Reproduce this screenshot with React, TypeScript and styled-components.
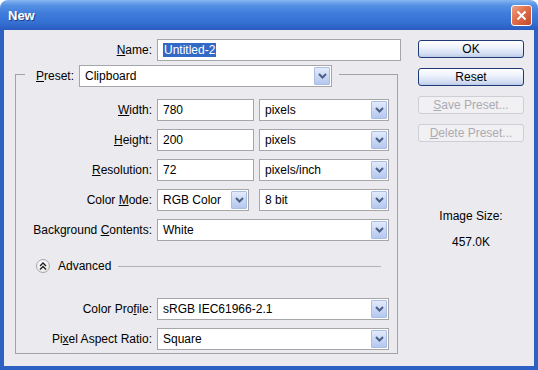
import React from "react";
import styled, { createGlobalStyle } from "styled-components";

const GlobalStyle = createGlobalStyle`
  html, body {
    margin: 0;
    padding: 0;
    background: #ffffff;
  }
  body {
    font-family: "Liberation Sans", Arial, sans-serif;
    font-size: 12px;
    color: #000000;
  }
`;

const Window = styled.div`
  width: 538px;
  height: 370px;
  display: flex;
  flex-direction: column;
  border-radius: 8px 8px 0 0;
  overflow: hidden;
`;

const TitleBar = styled.div`
  height: 30px;
  flex-shrink: 0;
  display: flex;
  align-items: center;
  justify-content: space-between;
  padding: 0 6px 0 8px;
  background: linear-gradient(
    #86b6f0 0%,
    #5590e4 18%,
    #3f7cdb 45%,
    #3570d2 75%,
    #2a5bc0 100%
  );
`;

const Title = styled.span`
  color: #ffffff;
  font-weight: bold;
  font-size: 13px;
  text-shadow: 1px 1px 0 #1d3f8c;
`;

const CloseButton = styled.div`
  width: 19px;
  height: 19px;
  border: 1px solid #ffffff;
  border-radius: 3px;
  display: flex;
  align-items: center;
  justify-content: center;
  background: linear-gradient(135deg, #eba286 0%, #e06e4a 45%, #c4482a 100%);
`;

const Frame = styled.div`
  flex: 1;
  display: flex;
  background: #ebeaee;
  border: 4px solid #2f61c4;
  border-top: none;
  padding: 9px 0 0 11px;
`;

const LeftColumn = styled.div`
  width: 386px;
  display: flex;
  flex-direction: column;
`;

const NameRow = styled.div`
  display: grid;
  grid-template-columns: 137px 244px;
  column-gap: 5px;
  align-items: center;
`;

const Label = styled.span`
  text-align: right;
  white-space: nowrap;
`;

const U = styled.span`
  text-decoration: underline;
`;

const TextBox = styled.div`
  height: 22px;
  box-sizing: border-box;
  border: 1px solid #a5a5aa;
  background: #ffffff;
  padding: 0 5px;
  display: flex;
  align-items: center;
  white-space: nowrap;
`;

const Selected = styled.span`
  background: #3169c6;
  color: #ffffff;
  padding: 0 1px;
`;

const SelectBox = styled.div<{ $width?: number }>`
  height: 22px;
  width: ${(p) => (p.$width ? `${p.$width}px` : "auto")};
  box-sizing: border-box;
  border: 1px solid #a5a5aa;
  background: #ffffff;
  padding: 1px 1px 1px 5px;
  display: flex;
  align-items: center;
  white-space: nowrap;
`;

const SelectText = styled.span`
  flex: 1;
`;

const ArrowButton = styled.div`
  width: 16px;
  height: 18px;
  box-sizing: border-box;
  border: 1px solid #aabde2;
  border-radius: 1px;
  background: linear-gradient(#e3ebfb, #c6d5f3 60%, #b4c7ee);
  display: flex;
  align-items: center;
  justify-content: center;
`;

const Group = styled.fieldset`
  margin: 0;
  width: 383px;
  min-width: 0;
  box-sizing: border-box;
  border: 1px solid #a3a3a6;
  padding: 12px 8px 3px 0;
  display: flex;
  flex-direction: column;
  gap: 8px;
`;

const Legend = styled.legend`
  margin-left: 9px;
  padding: 4px 7px 0 11px;
  display: flex;
  align-items: center;
  gap: 5px;
`;

const Row = styled.div`
  display: grid;
  grid-template-columns: 136px 1fr;
  column-gap: 5px;
  align-items: center;
`;

const Pair = styled.div`
  display: grid;
  grid-template-columns: 97px 130px;
  column-gap: 5px;
  align-items: center;
`;

const AdvancedRow = styled.div`
  display: flex;
  align-items: center;
  margin: 10px 8px 17px 20px;
`;

const RoundToggle = styled.div`
  width: 14px;
  height: 14px;
  box-sizing: border-box;
  border-radius: 50%;
  border: 1px solid #a8a8ac;
  background: radial-gradient(circle at 40% 35%, #ffffff, #e4e4e8);
  display: flex;
  align-items: center;
  justify-content: center;
  margin-right: 8px;
`;

const Rule = styled.div`
  flex: 1;
  height: 1px;
  background: #b4b4b8;
  margin-left: 7px;
`;

const RightColumn = styled.div`
  width: 106px;
  margin-left: 17px;
  padding-top: 1px;
  display: flex;
  flex-direction: column;
  gap: 10px;
`;

const Button = styled.div<{ $disabled?: boolean }>`
  height: 18px;
  box-sizing: border-box;
  border-radius: 3px;
  display: flex;
  align-items: center;
  justify-content: center;
  white-space: nowrap;
  border: 1px solid ${(p) => (p.$disabled ? "#cfced4" : "#1e3b78")};
  color: ${(p) => (p.$disabled ? "#acabb2" : "#000000")};
  background: ${(p) =>
    p.$disabled
      ? "#f1f0f3"
      : "linear-gradient(#ffffff 0%, #eef3fc 40%, #d3def3 80%, #bccbe9 100%)"};
`;

const SizeInfo = styled.div`
  margin-top: 57px;
  display: flex;
  flex-direction: column;
  align-items: center;
  gap: 12px;
  line-height: 14px;
`;

const Chevron = () => (
  <svg width="9" height="6" viewBox="0 0 9 6">
    <path d="M1 1 L4.5 4.5 L8 1" stroke="#4b5f86" strokeWidth="2" fill="none" />
  </svg>
);

const Select: React.FC<{ value: string; width?: number }> = ({ value, width }) => (
  <SelectBox $width={width}>
    <SelectText>{value}</SelectText>
    <ArrowButton>
      <Chevron />
    </ArrowButton>
  </SelectBox>
);

const App: React.FC = () => {
  return (
    <>
      <GlobalStyle />
      <Window>
        <TitleBar>
          <Title>New</Title>
          <CloseButton>
            <svg width="11" height="11" viewBox="0 0 11 11">
              <path d="M1.5 1.5 L9.5 9.5 M9.5 1.5 L1.5 9.5" stroke="#ffffff" strokeWidth="2" />
            </svg>
          </CloseButton>
        </TitleBar>

        <Frame>
          <LeftColumn>
            <NameRow>
              <Label>
                <U>N</U>ame:
              </Label>
              <TextBox>
                <Selected>Untitled-2</Selected>
              </TextBox>
            </NameRow>

            <Group>
              <Legend>
                <Label>
                  <U>P</U>reset:
                </Label>
                <Select value="Clipboard" width={253} />
              </Legend>

              <Row>
                <Label>
                  <U>W</U>idth:
                </Label>
                <Pair>
                  <TextBox>780</TextBox>
                  <Select value="pixels" />
                </Pair>
              </Row>
              <Row>
                <Label>
                  <U>H</U>eight:
                </Label>
                <Pair>
                  <TextBox>200</TextBox>
                  <Select value="pixels" />
                </Pair>
              </Row>
              <Row>
                <Label>
                  <U>R</U>esolution:
                </Label>
                <Pair>
                  <TextBox>72</TextBox>
                  <Select value="pixels/inch" />
                </Pair>
              </Row>
              <Row>
                <Label>
                  Color <U>M</U>ode:
                </Label>
                <Pair>
                  <Select value="RGB Color" width={92} />
                  <Select value="8 bit" />
                </Pair>
              </Row>
              <Row>
                <Label>
                  Background <U>C</U>ontents:
                </Label>
                <Select value="White" />
              </Row>

              <AdvancedRow>
                <RoundToggle>
                  <svg width="8" height="8" viewBox="0 0 8 8">
                    <path
                      d="M1 4 L4 1 L7 4 M1 7.5 L4 4.5 L7 7.5"
                      stroke="#1e1e1e"
                      strokeWidth="1.4"
                      fill="none"
                    />
                  </svg>
                </RoundToggle>
                <span>Advanced</span>
                <Rule />
              </AdvancedRow>

              <Row>
                <Label>
                  Color Pro<U>f</U>ile:
                </Label>
                <Select value="sRGB IEC61966-2.1" />
              </Row>
              <Row>
                <Label>
                  Pi<U>x</U>el Aspect Ratio:
                </Label>
                <Select value="Square" />
              </Row>
            </Group>
          </LeftColumn>

          <RightColumn>
            <Button>OK</Button>
            <Button>Reset</Button>
            <Button $disabled>
              <U>S</U>ave Preset...
            </Button>
            <Button $disabled>
              <U>D</U>elete Preset...
            </Button>
            <SizeInfo>
              <span>Image Size:</span>
              <span>457.0K</span>
            </SizeInfo>
          </RightColumn>
        </Frame>
      </Window>
    </>
  );
};

export default App;
